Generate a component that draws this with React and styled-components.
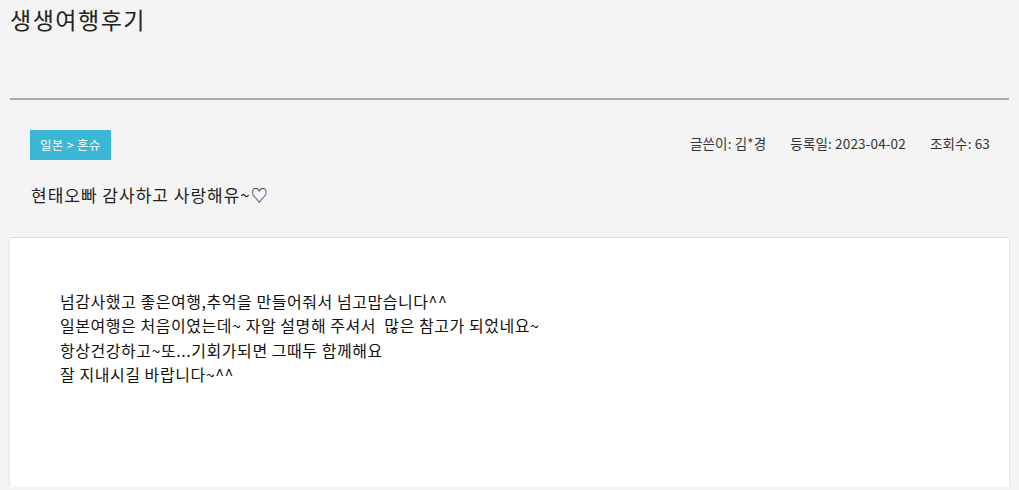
import styled, { createGlobalStyle } from 'styled-components'

const GlobalStyle = createGlobalStyle`
  html, body {
    margin: 0;
    background: #f4f4f4;
    font-family: "Noto Sans CJK KR", "Noto Sans", sans-serif;
    color: #222;
  }
`

const Page = styled.div`
  padding: 0 10px;
`

const Header = styled.header`
  height: 98px;
  border-bottom: 2px solid #aaa;
`

const PageTitle = styled.h1`
  margin: 0;
  padding: 3px 0 0;
  font-size: 23px;
  font-weight: 400;
  line-height: 32px;
  color: #222;
  letter-spacing: 1.5px;
`

const Info = styled.section`
  padding: 30px 19px 30px 20px;
  border-bottom: 1px solid #ddd;
`

const InfoTop = styled.div`
  display: flex;
  align-items: center;
  justify-content: space-between;
`

const Badge = styled.span`
  display: inline-block;
  height: 30px;
  line-height: 30px;
  padding: 0 10px;
  background: #3bb6d5;
  color: #fff;
  font-size: 12.5px;
  letter-spacing: 0.3px;
`

const Meta = styled.ul`
  display: flex;
  gap: 24px;
  margin: 0;
  padding: 0;
  list-style: none;
  font-size: 13.5px;
  letter-spacing: 0.15px;
  color: #333;
  transform: translateY(-2px);
`

const MetaItem = styled.li``

const Subject = styled.h2`
  margin: 23px 0 0 1px;
  font-size: 17px;
  font-weight: 400;
  line-height: 24px;
  letter-spacing: 1px;
  color: #222;
`

const Body = styled.article`
  min-height: 198px;
  padding: 51px 50px 0;
  background: #fff;
  box-shadow: 0 1px 2px rgba(0, 0, 0, 0.18);
  font-size: 16px;
  line-height: 24.3px;
  letter-spacing: 0.55px;
  color: #111;
`

const Line = styled.p`
  margin: 0;
  white-space: pre;
`

const lines = [
  '넘감사했고 좋은여행,추억을 만들어줘서 넘고맙습니다^^',
  '일본여행은 처음이였는데~ 자알 설명해 주셔서  많은 참고가 되었네요~',
  '항상건강하고~또...기회가되면 그때두 함께해요',
  '잘 지내시길 바랍니다~^^',
]

export default function App() {
  return (
    <>
      <GlobalStyle />
      <Page>
        <Header>
          <PageTitle>생생여행후기</PageTitle>
        </Header>
        <Info>
          <InfoTop>
            <Badge>일본 &gt; 혼슈</Badge>
            <Meta>
              <MetaItem>글쓴이: 김*경</MetaItem>
              <MetaItem>등록일: 2023-04-02</MetaItem>
              <MetaItem>조회수: 63</MetaItem>
            </Meta>
          </InfoTop>
          <Subject>현태오빠 감사하고 사랑해유~♡</Subject>
        </Info>
        <Body>
          {lines.map((t) => (
            <Line key={t}>{t}</Line>
          ))}
        </Body>
      </Page>
    </>
  )
}
